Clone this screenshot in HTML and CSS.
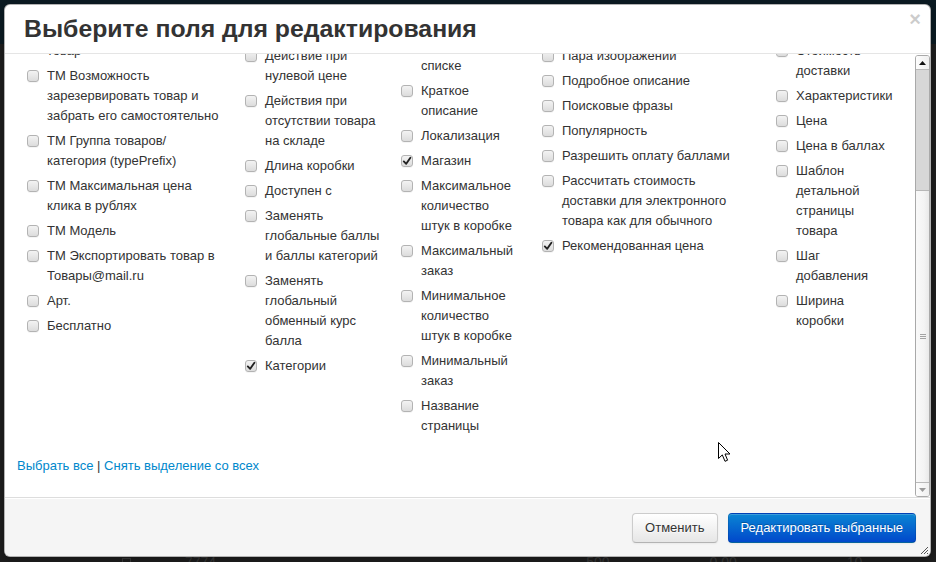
FILE: index.html
```html
<!DOCTYPE html>
<html lang="ru">
<head>
<meta charset="utf-8">
<title>Выберите поля для редактирования</title>
<link rel="stylesheet" href="styles.css">
</head>
<body>
<div class="page">
  <div class="page-top"></div>
  <div class="page-row">
    <span class="pr-cb"></span><span class="pr-a">7774</span><span class="pr-b">500</span><span class="pr-c">0.00</span><span class="pr-d">10</span>
  </div>
</div>

<div class="modal">
  <div class="modal-header">
    <h3 class="modal-title">Выберите поля для редактирования</h3>
    <span class="close">×</span>
  </div>

  <div class="modal-body">
    <div class="body-scroll">
      <div class="cols">
        <div class="col col-1">
          <label class="item"><span class="cb"></span><span class="txt">ТМ Бренд</span></label>
          <label class="item"><span class="cb"></span><span class="txt">ТМ Валюта</span></label>
          <label class="item"><span class="cb"></span><span class="txt">ТМ Возможность заказать товар</span></label>
          <label class="item"><span class="cb"></span><span class="txt">ТМ Возможность зарезервировать товар и забрать его самостоятельно</span></label>
          <label class="item"><span class="cb"></span><span class="txt">ТМ Группа товаров/<wbr>категория (typePrefix)</span></label>
          <label class="item"><span class="cb"></span><span class="txt">ТМ Максимальная цена клика в рублях</span></label>
          <label class="item"><span class="cb"></span><span class="txt">ТМ Модель</span></label>
          <label class="item"><span class="cb"></span><span class="txt">ТМ Экспортировать товар в Товары@mail.ru</span></label>
          <label class="item"><span class="cb"></span><span class="txt">Арт.</span></label>
          <label class="item"><span class="cb"></span><span class="txt">Бесплатно</span></label>
        </div>
        <div class="col col-2">
          <label class="item"><span class="cb"></span><span class="txt">Вес</span></label>
          <label class="item"><span class="cb"></span><span class="txt">Высота коробки</span></label>
          <label class="item"><span class="cb"></span><span class="txt">Глубина коробки</span></label>
          <label class="item"><span class="cb"></span><span class="txt">Действие при нулевой цене</span></label>
          <label class="item"><span class="cb"></span><span class="txt">Действия при отсутствии товара на складе</span></label>
          <label class="item"><span class="cb"></span><span class="txt">Длина коробки</span></label>
          <label class="item"><span class="cb"></span><span class="txt">Доступен с</span></label>
          <label class="item"><span class="cb"></span><span class="txt">Заменять глобальные баллы и баллы категорий</span></label>
          <label class="item"><span class="cb"></span><span class="txt">Заменять глобальный обменный курс балла</span></label>
          <label class="item"><span class="cb checked"><svg viewBox="0 0 10 10" width="10" height="10"><path d="M1.8 5.4 L4.2 7.8 L8.4 1.8" fill="none" stroke="#222" stroke-width="1.9" stroke-linecap="round" stroke-linejoin="round"/></svg></span><span class="txt">Категории</span></label>
        </div>
        <div class="col col-3">
          <label class="item"><span class="cb"></span><span class="txt">Изображение для анонса в каталоге</span></label>
          <label class="item"><span class="cb"></span><span class="txt">Картинка в списке</span></label>
          <label class="item"><span class="cb"></span><span class="txt">Краткое описание</span></label>
          <label class="item"><span class="cb"></span><span class="txt">Локализация</span></label>
          <label class="item"><span class="cb checked"><svg viewBox="0 0 10 10" width="10" height="10"><path d="M1.8 5.4 L4.2 7.8 L8.4 1.8" fill="none" stroke="#222" stroke-width="1.9" stroke-linecap="round" stroke-linejoin="round"/></svg></span><span class="txt">Магазин</span></label>
          <label class="item"><span class="cb"></span><span class="txt">Максимальное количество штук в коробке</span></label>
          <label class="item"><span class="cb"></span><span class="txt">Максимальный заказ</span></label>
          <label class="item"><span class="cb"></span><span class="txt">Минимальное количество штук в коробке</span></label>
          <label class="item"><span class="cb"></span><span class="txt">Минимальный заказ</span></label>
          <label class="item"><span class="cb"></span><span class="txt">Название страницы</span></label>
        </div>
        <div class="col col-4">
          <label class="item"><span class="cb"></span><span class="txt">Новинка</span></label>
          <label class="item"><span class="cb"></span><span class="txt">Описание для анонса</span></label>
          <label class="item"><span class="cb"></span><span class="txt">Основная картинка</span></label>
          <label class="item"><span class="cb"></span><span class="txt">Пара изображений</span></label>
          <label class="item"><span class="cb"></span><span class="txt">Подробное описание</span></label>
          <label class="item"><span class="cb"></span><span class="txt">Поисковые фразы</span></label>
          <label class="item"><span class="cb"></span><span class="txt">Популярность</span></label>
          <label class="item"><span class="cb"></span><span class="txt">Разрешить оплату баллами</span></label>
          <label class="item"><span class="cb"></span><span class="txt">Рассчитать стоимость доставки для электронного товара как для обычного</span></label>
          <label class="item"><span class="cb checked"><svg viewBox="0 0 10 10" width="10" height="10"><path d="M1.8 5.4 L4.2 7.8 L8.4 1.8" fill="none" stroke="#222" stroke-width="1.9" stroke-linecap="round" stroke-linejoin="round"/></svg></span><span class="txt">Рекомендованная цена</span></label>
        </div>
        <div class="col col-5">
          <label class="item"><span class="cb"></span><span class="txt">Сортировка</span></label>
          <label class="item"><span class="cb"></span><span class="txt">Срок производства</span></label>
          <label class="item"><span class="cb"></span><span class="txt">Стоимость доставки</span></label>
          <label class="item"><span class="cb"></span><span class="txt">Характеристики</span></label>
          <label class="item"><span class="cb"></span><span class="txt">Цена</span></label>
          <label class="item"><span class="cb"></span><span class="txt">Цена в баллах</span></label>
          <label class="item"><span class="cb"></span><span class="txt">Шаблон детальной страницы товара</span></label>
          <label class="item"><span class="cb"></span><span class="txt">Шаг добавления</span></label>
          <label class="item"><span class="cb"></span><span class="txt">Ширина коробки</span></label>
        </div>
      </div>
      <div class="links"><a href="#">Выбрать все</a> | <a href="#">Снять выделение со всех</a></div>
    </div>

    <div class="sb">
      <div class="sb-btn sb-up"><svg viewBox="0 0 7 4" width="7" height="4"><path d="M0 4 L3.5 0 L7 4 Z" fill="#111"/></svg></div>
      <div class="sb-track"></div>
      <div class="sb-thumb"><span class="grip"></span></div>
      <div class="sb-btn sb-down"><svg viewBox="0 0 7 4" width="7" height="4"><path d="M0 0 L7 0 L3.5 4 Z" fill="#9a9a9a"/></svg></div>
    </div>
  </div>

  <div class="modal-footer">
    <button class="btn">Отменить</button>
    <button class="btn btn-primary">Редактировать выбранные</button>
  </div>

  <svg class="resize" viewBox="0 0 8 8" width="8" height="8"><path d="M8 1 L1 8 M8 4 L4 8 M8 7 L7 8" stroke="#555" stroke-width="1"/></svg>
</div>

<svg class="cursor" viewBox="0 0 13 20" width="13" height="20"><path d="M0.5 0.5 L0.5 16.5 L4.3 12.9 L7 19.3 L9.6 18.2 L7 12 L12 12 Z" fill="#fff" stroke="#000" stroke-width="1" stroke-linejoin="round"/></svg>
</body>
</html>
```

FILE: styles.css
```css
* { box-sizing: border-box; }

html, body {
  margin: 0;
  padding: 0;
}

body {
  width: 936px;
  height: 562px;
  overflow: hidden;
  position: relative;
  background: #1e1e1e;
  font-family: "Liberation Sans", Arial, sans-serif;
  font-size: 13px;
  line-height: 20px;
  color: #333;
}

/* page behind the overlay */
.page {
  height: 562px;
}

.page-top {
  height: 44px;
  background: #0b1a22;
}

.page-row {
  display: flex;
  align-items: center;
  margin-top: 508px;
  height: 20px;
  color: #3a3a3a;
  font-size: 14px;
}

.pr-cb {
  width: 9px;
  height: 9px;
  border: 1px solid #3a3a3a;
  margin-left: 122px;
}

.pr-a { margin-left: 54px; }
.pr-b { margin-left: 370px; }
.pr-c { margin-left: 100px; }
.pr-d { margin-left: 110px; }

/* modal */
.modal {
  position: absolute;
  left: 4px;
  top: 4px;
  width: 927px;
  height: 553px;
  background: #fff;
  border: 1px solid rgba(0, 0, 0, 0.3);
  border-radius: 6px;
  box-shadow: 0 3px 7px rgba(0, 0, 0, 0.3);
  display: flex;
  flex-direction: column;
  overflow: hidden;
}

.modal-header {
  height: 49px;
  flex: none;
  display: flex;
  align-items: center;
  padding: 0 9px 0 19px;
  border-bottom: 1px solid #e5e5e5;
}

.modal-title {
  margin: 0;
  font-size: 24.8px;
  font-weight: bold;
  line-height: 30px;
  color: #333;
}

.close {
  margin-left: auto;
  align-self: flex-start;
  margin-top: 4px;
  font-size: 20px;
  font-weight: bold;
  line-height: 20px;
  color: #000;
  opacity: 0.2;
}

.modal-body {
  height: 443px;
  flex: none;
  display: flex;
}

.body-scroll {
  flex: 1;
  overflow: hidden;
  padding-left: 12px;
}

.cols {
  display: grid;
  grid-template-columns: 218px 156px 141px 234px 1fr;
  margin: -83px 0 0 10px;
}

.col-1 { padding-right: 21px; }
.col-2 { padding-right: 15px; }
.col-3 { padding-right: 21px; }
.col-4 { padding-right: 39px; }
.col-5 { padding-right: 21px; }

.item {
  display: flex;
  gap: 8px;
  margin-bottom: 5px;
}

.cb {
  flex: none;
  width: 12px;
  height: 12px;
  margin-top: 4px;
  border: 1px solid #b3b3b3;
  border-radius: 3px;
  background: linear-gradient(#f3f3f3, #dcdcdc);
  box-shadow: 0 1px 0 rgba(0, 0, 0, 0.04);
  display: flex;
  align-items: center;
  justify-content: center;
}

.txt {
  min-width: 0;
}

.links {
  margin-top: 15px;
}

.links a {
  color: #0088cc;
  text-decoration: none;
}

/* scrollbar */
.sb {
  flex: none;
  width: 15px;
  margin-top: 1px;
  display: flex;
  flex-direction: column;
  border: 1px solid #a9a9a9;
  border-radius: 3px;
  overflow: hidden;
}

.sb-btn {
  height: 14px;
  flex: none;
  display: flex;
  align-items: center;
  justify-content: center;
  background: linear-gradient(to right, #fdfdfd, #efefef);
}

.sb-up { border-bottom: 1px solid #b9b9b9; }
.sb-down { border-top: 1px solid #b9b9b9; }

.sb-track {
  height: 120px;
  flex: none;
  background: #d7d7d7;
}

.sb-thumb {
  flex: 1;
  border-top: 1px solid #b7b7b7;
  background: linear-gradient(to right, #f9f9f9 0%, #f4f4f4 60%, #e9e9e9 100%);
  display: flex;
  align-items: center;
  justify-content: center;
}

.grip {
  width: 6px;
  height: 5px;
  border-top: 1px solid #a3a3a3;
  border-bottom: 1px solid #a3a3a3;
  background: linear-gradient(transparent 1px, #a3a3a3 1px, #a3a3a3 2px, transparent 2px);
}

/* footer */
.modal-footer {
  height: 59px;
  flex: none;
  display: flex;
  justify-content: flex-end;
  gap: 10px;
  padding: 15px 14px 13px;
  background: #f5f5f5;
  border-top: 1px solid #ddd;
  box-shadow: inset 0 1px 0 #fff;
}

.btn {
  height: 30px;
  padding: 4px 12px;
  font-family: "Liberation Sans", Arial, sans-serif;
  font-size: 13px;
  line-height: 20px;
  color: #333;
  text-shadow: 0 1px 1px rgba(255, 255, 255, 0.75);
  background: linear-gradient(#ffffff, #e6e6e6);
  border: 1px solid #cccccc;
  border-bottom-color: #b3b3b3;
  border-radius: 4px;
  box-shadow: inset 0 1px 0 rgba(255, 255, 255, 0.2), 0 1px 2px rgba(0, 0, 0, 0.05);
}

.btn-primary {
  color: #fff;
  text-shadow: 0 -1px 0 rgba(0, 0, 0, 0.25);
  background: linear-gradient(#0a85d3, #0148cb);
  border-color: rgba(0, 0, 0, 0.1) rgba(0, 0, 0, 0.1) rgba(0, 0, 0, 0.25);
}

.resize {
  position: absolute;
  right: 2px;
  bottom: 2px;
}

.cursor {
  position: absolute;
  left: 718px;
  top: 442px;
}
```
